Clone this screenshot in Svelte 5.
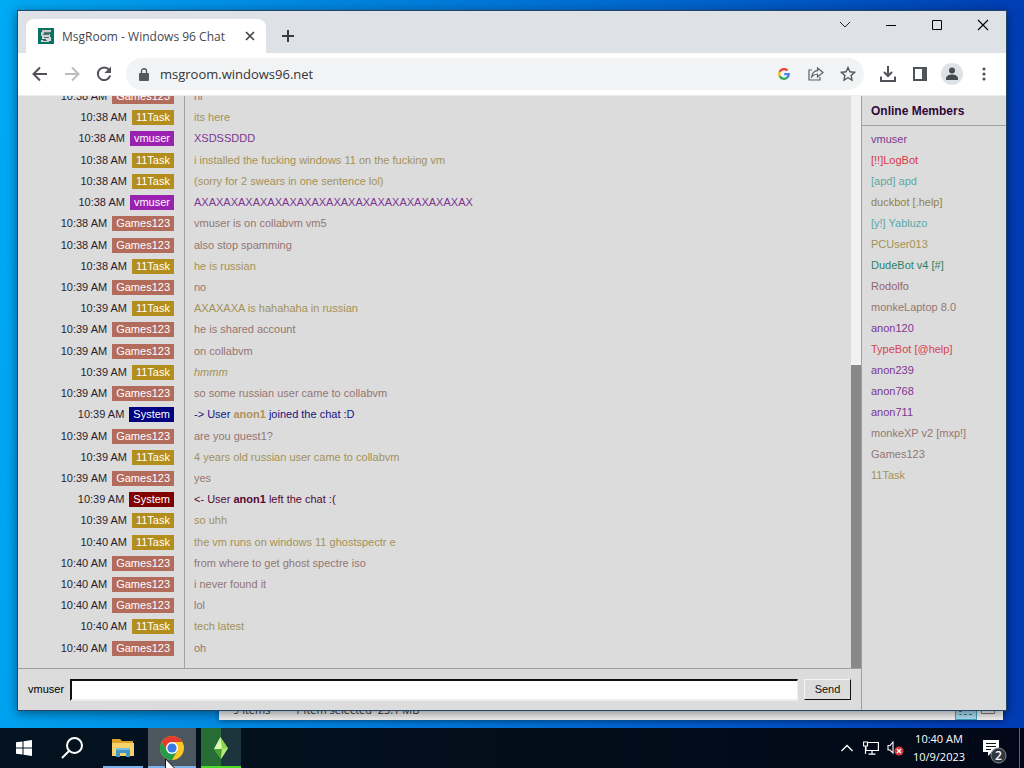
<script>
  const colors = {
    Games123: { badge: '#b36b5c', text: '#947672' },
    '11Task': { badge: '#b38e1c', text: '#a39258' },
    vmuser: { badge: '#9b22b0', text: '#7d3692' }
  };

  const messages = [
    ['10:38 AM', 'Games123', 'hi'],
    ['10:38 AM', '11Task', 'its here'],
    ['10:38 AM', 'vmuser', 'XSDSSDDD'],
    ['10:38 AM', '11Task', 'i installed the fucking windows 11 on the fucking vm'],
    ['10:38 AM', '11Task', '(sorry for 2 swears in one sentence lol)'],
    ['10:38 AM', 'vmuser', 'AXAXAXAXAXAXAXAXAXAXAXAXAXAXAXAXAXAXAX'],
    ['10:38 AM', 'Games123', 'vmuser is on collabvm vm5'],
    ['10:38 AM', 'Games123', 'also stop spamming'],
    ['10:38 AM', '11Task', 'he is russian'],
    ['10:39 AM', 'Games123', 'no'],
    ['10:39 AM', '11Task', 'AXAXAXA is hahahaha in russian'],
    ['10:39 AM', 'Games123', 'he is shared account'],
    ['10:39 AM', 'Games123', 'on collabvm'],
    ['10:39 AM', '11Task', 'hmmm', 'em'],
    ['10:39 AM', 'Games123', 'so some russian user came to collabvm'],
    ['10:39 AM', 'System', '', 'join'],
    ['10:39 AM', 'Games123', 'are you guest1?'],
    ['10:39 AM', '11Task', '4 years old russian user came to collabvm'],
    ['10:39 AM', 'Games123', 'yes'],
    ['10:39 AM', 'System', '', 'leave'],
    ['10:39 AM', '11Task', 'so uhh'],
    ['10:40 AM', '11Task', 'the vm runs on windows 11 ghostspectr e'],
    ['10:40 AM', 'Games123', 'from where to get ghost spectre iso'],
    ['10:40 AM', 'Games123', 'i never found it'],
    ['10:40 AM', 'Games123', 'lol'],
    ['10:40 AM', '11Task', 'tech latest'],
    ['10:40 AM', 'Games123', 'oh']
  ].map(([time, user, text, kind]) => ({
    time, user, text, kind,
    badge: colors[user]?.badge ?? (kind === 'join' ? '#000080' : '#800000'),
    color: colors[user]?.text ?? (kind === 'join' ? '#151580' : '#570833')
  }));

  const members = [
    ['vmuser', '#7d3692'],
    ['[!!]LogBot', '#d8383f'],
    ['[apd] apd', '#5aa9a4'],
    ['duckbot [.help]', '#94824c'],
    ['[y!] Yabluzo', '#5aa9a4'],
    ['PCUser013', '#a39258'],
    ['DudeBot v4 [#]', '#2f8166'],
    ['Rodolfo', '#96646a'],
    ['monkeLaptop 8.0', '#947672'],
    ['anon120', '#7d3692'],
    ['TypeBot [@help]', '#d84450'],
    ['anon239', '#7d3692'],
    ['anon768', '#7d3692'],
    ['anon711', '#7d3692'],
    ['monkeXP v2 [mxp!]', '#947672'],
    ['Games123', '#947672'],
    ['11Task', '#a39258']
  ];

  let draft = $state('');
  let address = $state('msgroom.windows96.net');
</script>

<div class="desktop">
  <div class="explorer">
    <div class="status">
      <span>9 items</span><span>1 item selected&nbsp; 23.1 MB</span>
      <span class="views">
        <i class="view on"><svg width="16" height="9" viewBox="0 0 16 9" fill="none" stroke="#47717f"><path d="M1.5 1.5h2v2h-2zM1.5 6.500h2M6 2.500h3M11 2.500h3M6 6.500h3M11 6.500h3" /></svg></i>
        <i class="view"><svg width="14" height="9" viewBox="0 0 14 9" fill="none" stroke="#777"><path d="M.5 .5h13v5H.5z" /></svg></i>
      </span>
    </div>
  </div>

  <main class="browser">
    <header class="tabs">
      <div class="tab">
        <svg class="fav" width="16" height="16" viewBox="0 0 16 16"><path fill="#087365" d="M0 0h16v16H0z" /><path fill="#c9c8c6" d="M4 2h9v2H6v2h6v2H3V4h1z" /><path fill="#777" d="M6 4h6v1H6zM5 6h6v1H5z" /><path fill="#d8d8d8" d="M4 8h8v1h1v4h-2v1H3v-2h5v-1H4z" /><path fill="#4d6666" d="M6 9h5v1H6zM5 12h4v1H5z" /></svg>
        <span>MsgRoom - Windows 96 Chat</span>
        <button class="close" aria-label="Close tab"><svg width="10" height="10" viewBox="0 0 10 10" stroke="#3c4043" stroke-width="1.6"><path d="M1 1l8 8M9 1L1 9" /></svg></button>
      </div>
      <button class="new" aria-label="New tab"><svg width="14" height="14" viewBox="0 0 14 14" stroke="#36393d" stroke-width="2"><path d="M7 1v12M1 7h12" /></svg></button>
      <div class="controls">
        <button aria-label="Search tabs"><svg width="12" height="12" viewBox="0 0 12 12" fill="none" stroke="#222"><path d="M1 3l5 5 5-5" /></svg></button>
        <button aria-label="Minimize"><svg width="12" height="12" viewBox="0 0 12 12" stroke="#000"><path d="M1 6.500h10" /></svg></button>
        <button aria-label="Maximize"><svg width="12" height="12" viewBox="0 0 12 12" fill="none" stroke="#000"><path d="M1.500 1.500h9v9h-9z" /></svg></button>
        <button aria-label="Close"><svg width="12" height="12" viewBox="0 0 12 12" stroke="#000" stroke-width="1.100"><path d="M1 1l10 10M11 1L1 11" /></svg></button>
      </div>
    </header>

    <nav class="toolbar">
      <button aria-label="Back"><svg width="16" height="16" viewBox="0 0 16 16" fill="none" stroke="#505357" stroke-width="2"><path d="M15 8H2M8 1.500L1.500 8 8 14.500" /></svg></button>
      <button aria-label="Forward"><svg width="16" height="16" viewBox="0 0 16 16" fill="none" stroke="#babcbe" stroke-width="2"><path d="M1 8h13M8 1.500L14.500 8 8 14.500" /></svg></button>
      <button aria-label="Reload"><svg width="16" height="16" viewBox="0 0 16 16" fill="none" stroke="#505357" stroke-width="2"><path d="M13.200 4A6.300 6.300 0 1 0 14.200 9.500" /><path fill="#505357" stroke="none" d="M15 .5V7H8.500z" /></svg></button>
      <div class="address">
        <svg width="10" height="13" viewBox="0 0 10 13"><path fill="#55585c" d="M1 5h8q1 0 1 1v6q0 1-1 1H1q-1 0-1-1V6q0-1 1-1z" /><path fill="none" stroke="#55585c" stroke-width="1.400" d="M2.500 5V3a2.500 2.200 0 0 1 5 0v2" /></svg>
        <input aria-label="Address" bind:value={address} />
        <button aria-label="Google"><svg width="12" height="12" viewBox="0 0 12 12" fill="none" stroke-width="2.200"><path stroke="#ea4335" d="M1.600 4A4.800 4.800 0 0 1 9.500 2.600" /><path stroke="#fbbc05" d="M1.600 4A4.800 4.800 0 0 0 1.600 8" /><path stroke="#34a853" d="M1.600 8A4.800 4.800 0 0 0 9.100 9.600" /><path stroke="#4285f4" d="M9.100 9.600A4.800 4.800 0 0 0 10.800 6.100H6.200" /></svg></button>
        <button aria-label="Share"><svg width="16" height="14" viewBox="0 0 16 14" fill="none" stroke="#5c5f63" stroke-width="1.200"><path d="M4 3H1v10h11v-3" /><path d="M9.500 1L15 5.500 9.500 10V7.300Q6 7 3.700 9.800 4.500 4 9.500 3.600z" /></svg></button>
        <button aria-label="Bookmark"><svg width="16" height="16" viewBox="0 0 16 16" fill="none" stroke="#55585c" stroke-width="1.400"><path d="M8 1.500l1.900 4.300 4.600.5-3.400 3.100.9 4.700L8 11.700l-4 2.400.9-4.700-3.400-3.100 4.600-.5z" /></svg></button>
      </div>
      <button aria-label="Downloads"><svg width="16" height="16" viewBox="0 0 16 16" fill="none" stroke="#505357" stroke-width="2"><path d="M8 0v10M4 6l4 4 4-4M1 10.500V15h14v-4.500" /></svg></button>
      <button aria-label="Side panel"><svg width="14" height="14" viewBox="0 0 14 14"><path fill="none" stroke="#505357" stroke-width="2" d="M1 1h12v12H1z" /><path fill="#505357" d="M9 1h4v12H9z" /></svg></button>
      <button aria-label="Profile"><svg width="22" height="22" viewBox="0 0 22 22"><circle cx="11" cy="11" r="11" fill="#dee1e6" /><circle cx="11" cy="7.500" r="3" fill="#474c54" /><path fill="#474c54" d="M5 17v-1.500c0-2.500 3-4 6-4s6 1.500 6 4V17z" /></svg></button>
      <button aria-label="Menu"><svg width="4" height="14" viewBox="0 0 4 14" fill="#505357"><circle cx="2" cy="2" r="1.600" /><circle cx="2" cy="7" r="1.600" /><circle cx="2" cy="12" r="1.600" /></svg></button>
    </nav>

    <section class="page">
      <div class="chat">
        <div class="log">
          <ul class="messages">
            {#each messages as m}
              <li>
                <div class="who"><time>{m.time}</time><span class="badge" style:background={m.badge}>{m.user}</span></div>
                <div class="text" style:color={m.color}>
                  {#if m.kind === 'join'}-&gt; User <b class="tan">anon1</b> joined the chat :D
                  {:else if m.kind === 'leave'}&lt;- User <b>anon1</b> left the chat :(
                  {:else if m.kind === 'em'}<em>{m.text}</em>
                  {:else}{m.text}{/if}
                </div>
              </li>
            {/each}
          </ul>
          <div class="scroll"><div class="thumb"></div></div>
        </div>
        <form class="compose" onsubmit={(e) => e.preventDefault()}>
          <label for="message">vmuser</label>
          <input id="message" bind:value={draft} />
          <button>Send</button>
        </form>
      </div>
      <aside>
        <h2>Online Members</h2>
        <ul>
          {#each members as [name, color]}<li style:color={color}>{name}</li>{/each}
        </ul>
      </aside>
    </section>
  </main>

  <footer class="taskbar">
    <button class="task" aria-label="Start"><svg width="16" height="16" viewBox="0 0 16 16" fill="#fff"><path d="M0 2.300L6.500 1.400v6.100H0zM7.500 1.200L16 0v7.500H7.500zM0 8.500h6.500v6.100L0 13.700zM7.500 8.500H16V16l-8.500-1.200z" /></svg></button>
    <button class="task" aria-label="Search"><svg width="22" height="22" viewBox="0 0 22 22" fill="none" stroke="#fff" stroke-width="2"><circle cx="13.500" cy="8.500" r="7.500" /><path d="M8 14l-7 7" /></svg></button>
    <button class="task open files" aria-label="File Explorer"><svg width="22" height="18" viewBox="0 0 22 18"><path fill="#dfa32c" d="M0 0h8l2 2h11v4H0z" /><path fill="#f8d36b" d="M0 4h22v13H0z" /><path fill="#4397c7" d="M4 9h14v9h-4v-4H8v4H4z" /><path fill="#76bddf" d="M4 9h14v2H4z" /></svg></button>
    <button class="task open active" aria-label="Chrome"><svg width="24" height="24" viewBox="0 0 24 24"><circle cx="12" cy="12" r="12" fill="#f9c622" /><path fill="#e33b2e" d="M1.600 6A12 12 0 0 1 22.400 6H12L7 15z" /><path fill="#269b4b" d="M1.600 6A12 12 0 0 0 12 24l5.200-9H7z" /><circle cx="12" cy="12" r="6" fill="#fff" /><circle cx="12" cy="12" r="4.600" fill="#3979e6" /></svg></button>
    <button class="task open sims" aria-label="The Sims"><svg width="16" height="22" viewBox="0 0 16 22"><path fill="#8bd94b" d="M7.500 0L15 11 8 22 1 12z" /><path fill="#d9f6b2" d="M7.500 0L9 12 1 12z" /><path fill="#4c9f2e" d="M1 12l8 0-1 10z" /><path fill="#b6e983" d="M9 12l6-1-7 11z" /></svg></button>
    <div class="tray">
      <button class="small" aria-label="Show hidden icons"><svg width="12" height="8" viewBox="0 0 12 8" fill="none" stroke="#fff" stroke-width="1.300"><path d="M.5 7L6 1.500 11.500 7" /></svg></button>
      <button class="small" aria-label="Network"><svg width="16" height="14" viewBox="0 0 16 14" fill="none" stroke="#fff" stroke-width="1.200"><path d="M5 1.500h10.400v8H3V6M.5 1h4v4h-4zM2.500 5v8M9 9.500V13M5.500 13.200h7" /></svg></button>
      <button class="small" aria-label="Volume muted"><svg width="17" height="15" viewBox="0 0 17 15"><path fill="none" stroke="#fff" stroke-width="1.100" d="M1 4.500h2l3-3.500v11L3 9H1z" /><circle cx="12" cy="10" r="4.600" fill="#d6353c" /><path stroke="#fff" stroke-width="1.300" d="M10 8l4 4M14 8l-4 4" /></svg></button>
      <button class="clock"><span>10:40 AM</span><span>10/9/2023</span></button>
      <button class="notes" aria-label="2 notifications"><svg width="24" height="24" viewBox="0 0 24 24"><path fill="#fff" d="M0 0h16v12H9l-4 4v-4H0z" /><path stroke="#0b1520" d="M3 3.500h10M3 6.500h10M3 9.500h5" /><circle cx="15.500" cy="15.500" r="7.500" fill="#303740" stroke="#858b91" /><text x="15.500" y="20" text-anchor="middle" fill="#fff" font-size="12" font-weight="600">2</text></svg></button>
      <i class="peek"></i>
    </div>
  </footer>

  <svg class="cursor" width="12" height="19" viewBox="0 0 12 19"><path fill="#fff" stroke="#111" d="M.5.8v15.500l3.700-3.500 2.500 5.500 2-1-2.400-5.300h5z" /></svg>
</div>

<style>
  :global(body) { margin: 0; }
  * { box-sizing: border-box; }
  button, input { font: inherit; color: inherit; border: 0; padding: 0; background: none; }
  button { display: flex; align-items: center; justify-content: center; }
  svg { display: block; flex: none; }
  ul { list-style: none; margin: 0; padding: 0; }

  .desktop {
    position: relative;
    height: 100vh;
    overflow: hidden;
    display: flex;
    flex-direction: column;
    justify-content: flex-end;
    background: linear-gradient(95deg, #00aaf4 0%, #0090e6 20%, #0068d0 60%, #003cb4 95%);
    font-family: "Open Sans", "Noto Sans", sans-serif;
    font-size: 12px;
  }

  .explorer {
    position: absolute;
    inset: 60px 21px 48px 219px;
    display: flex;
    align-items: flex-end;
    background: #f0f0f0;
    box-shadow: 0 1px 6px #0006;
  }
  .status { flex: 1; display: flex; align-items: center; gap: 24px; height: 22px; padding: 0 4px 0 14px; font-size: 11px; color: #333; }
  .views { display: flex; margin-left: auto; height: 22px; }
  .view { width: 22px; display: flex; align-items: flex-end; justify-content: center; padding-bottom: 3px; }
  .view.on { background: #a9dcee; border: 1px solid #429fc2; padding-bottom: 2px; }

  .browser {
    position: absolute;
    inset: 10px 17px 57px;
    display: flex;
    flex-direction: column;
    border: 1px solid #23456a;
    background: #dcdcdc;
    box-shadow: 0 2px 10px #0007;
  }
  .tabs { display: flex; height: 42px; padding: 8px 0 0 8px; background: #dee1e5; }
  .tab { display: flex; align-items: center; width: 240px; padding: 0 11px 0 12px; gap: 8px; background: #fff; border-radius: 8px 8px 0 0; color: #45494d; white-space: nowrap; }
  .close { margin-left: auto; }
  .new { width: 44px; }
  .controls { display: flex; margin-left: auto; margin-top: -8px; height: 28px; }
  .controls button { width: 46px; }

  .toolbar { display: flex; align-items: center; height: 43px; padding: 0 6px; background: #fff; border-bottom: 1px solid #ececec; }
  .toolbar button { width: 32px; height: 32px; }
  .address { flex: 1; display: flex; align-items: center; min-width: 0; height: 32px; margin: 0 8px 0 6px; padding-left: 13px; border-radius: 16px; background: #f1f3f4; }
  .address input { flex: 1; min-width: 0; margin-left: 11px; font-size: 13px; color: #333639; outline: 0; }

  .page { flex: 1; min-height: 0; display: flex; font: 11px/15px "Liberation Sans", Arial, sans-serif; }
  .chat { flex: 1; min-width: 0; display: flex; flex-direction: column; }
  .log { flex: 1; min-height: 0; display: flex; overflow: hidden; border-bottom: 1px solid #a0a0a0; }
  .messages { flex: 1; min-width: 0; display: flex; flex-direction: column; margin-top: -10px; }
  .messages li { flex: 1 0 21px; display: grid; grid-template-columns: 167px 1fr; }
  .messages li:last-child { flex-basis: 30px; }
  .who { display: flex; justify-content: flex-end; align-items: flex-start; gap: 5px; padding: 3px 10px 0 0; border-right: 1px solid #a2a2a2; color: #2a1c2e; }
  .badge { padding: 0 4px; color: #fff; }
  .text { padding: 3px 9px 0; }
  .tan { color: #b3925a; }
  .scroll { width: 10px; display: flex; align-items: flex-end; background: #f1f1f1; }
  .thumb { width: 100%; height: 53%; background: #888; }
  .compose { display: flex; align-items: center; gap: 6px; height: 41px; padding: 0 10px; }
  .compose input { flex: 1; min-width: 0; height: 22px; padding: 0 4px; background: #fff; border: 2px solid; border-color: #111 #eee #eee #111; border-right-width: 1px; outline: 0; }
  .compose button { width: 47px; height: 21px; border: 1px solid; border-color: #f5f5f5 #111 #111 #f5f5f5; color: #111; }
  aside { width: 145px; border-left: 1px solid #a0a0a0; }
  h2 { margin: 0; padding: 8px 9px 6px; font-size: 12px; line-height: 15px; color: #2f0838; border-bottom: 1px solid #a0a0a0; }
  aside ul { padding: 3px 9px; line-height: 21px; }

  .taskbar { position: relative; display: flex; height: 40px; background: linear-gradient(90deg, #03131f, #020817); color: #fff; }
  .task { width: 48px; }
  .open { border: solid #7cb2ea; border-width: 0 0 2px; padding-top: 2px; }
  .files { width: 40px; margin: 0 5px 0 7px; }
  .active { background: #4b565f; }
  .sims { width: 40px; margin-left: 5px; border-color: #4bdc28; background: linear-gradient(90deg, #286c35 50%, #1c343b 50%); }
  .tray { display: flex; margin-left: auto; }
  .small { width: 24px; }
  .clock { width: 64px; flex-direction: column; line-height: 18px; font-size: 11px; }
  .notes { width: 48px; padding-top: 8px; }
  .peek { width: 5px; border-left: 1px solid #59626d; }
  .cursor { position: absolute; left: 165px; bottom: -9px; }
</style>
